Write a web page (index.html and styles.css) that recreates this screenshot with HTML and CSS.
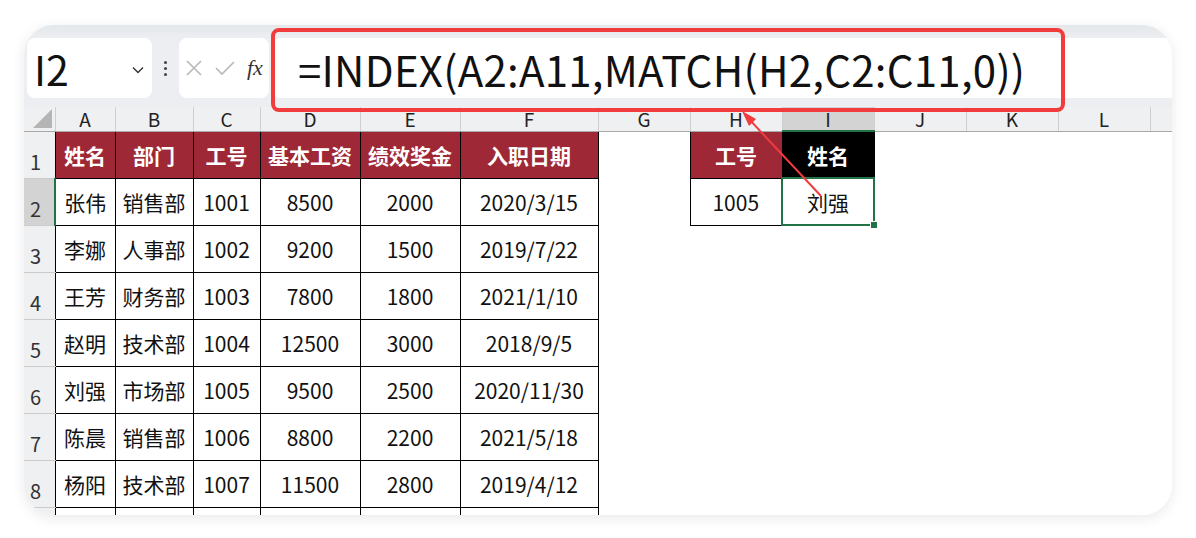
FILE: index.html
```html
<!DOCTYPE html>
<html lang="zh-CN">
<head>
<meta charset="utf-8">
<title>INDEX MATCH</title>
<link rel="stylesheet" href="styles.css">
</head>
<body>
<div class="card">
  <div class="toolbar">
    <div class="namebox">
      <span class="ref">I2</span>
      <svg class="chev" width="12" height="8" viewBox="0 0 12 8"><polyline points="1,1.5 6,6.5 11,1.5" fill="none" stroke="#333" stroke-width="1.4"/></svg>
    </div>
    <div class="dots"><span></span><span></span><span></span></div>
    <div class="fxbox">
      <svg width="18" height="18" viewBox="0 0 18 18"><path d="M2 2 L16 16 M16 2 L2 16" stroke="#b8b8b8" stroke-width="1.6" fill="none"/></svg>
      <svg width="20" height="16" viewBox="0 0 20 16"><polyline points="1,8 7,14 19,2" stroke="#b8b8b8" stroke-width="1.6" fill="none"/></svg>
      <span class="fx">fx</span>
    </div>
    <div class="formula">=INDEX(A2:A11,MATCH(H2,C2:C11,0))</div>
  </div>
  <table class="sheet">
    <colgroup>
      <col class="w-rh"><col class="w-a"><col class="w-b"><col class="w-c"><col class="w-d"><col class="w-e"><col class="w-f">
      <col class="w-g"><col class="w-g"><col class="w-g"><col class="w-g"><col class="w-g"><col class="w-g"><col>
    </colgroup>
    <tr class="colrow">
      <th class="corner"><span class="tri"></span></th>
      <th class="col">A</th><th class="col">B</th><th class="col">C</th><th class="col">D</th><th class="col">E</th><th class="col">F</th>
      <th class="col">G</th><th class="col">H</th><th class="col sel">I</th><th class="col">J</th><th class="col">K</th><th class="col">L</th><th class="col last"></th>
    </tr>
    <tr>
      <td class="rh">1</td>
      <td class="h">姓名</td><td class="h">部门</td><td class="h">工号</td><td class="h">基本工资</td><td class="h">绩效奖金</td><td class="h">入职日期</td>
      <td class="e"></td><td class="h">工号</td><td class="h black">姓名</td><td class="e"></td><td class="e"></td><td class="e"></td><td class="e"></td>
    </tr>
    <tr>
      <td class="rh rsel">2</td>
      <td class="d">张伟</td><td class="d">销售部</td><td class="d">1001</td><td class="d">8500</td><td class="d">2000</td><td class="d">2020/3/15</td>
      <td class="e"></td><td class="d">1005</td><td class="d active">刘强<span class="handle"></span></td><td class="e"></td><td class="e"></td><td class="e"></td><td class="e"></td>
    </tr>
    <tr>
      <td class="rh">3</td>
      <td class="d">李娜</td><td class="d">人事部</td><td class="d">1002</td><td class="d">9200</td><td class="d">1500</td><td class="d">2019/7/22</td>
      <td class="e" colspan="7"></td>
    </tr>
    <tr>
      <td class="rh">4</td>
      <td class="d">王芳</td><td class="d">财务部</td><td class="d">1003</td><td class="d">7800</td><td class="d">1800</td><td class="d">2021/1/10</td>
      <td class="e" colspan="7"></td>
    </tr>
    <tr>
      <td class="rh">5</td>
      <td class="d">赵明</td><td class="d">技术部</td><td class="d">1004</td><td class="d">12500</td><td class="d">3000</td><td class="d">2018/9/5</td>
      <td class="e" colspan="7"></td>
    </tr>
    <tr>
      <td class="rh">6</td>
      <td class="d">刘强</td><td class="d">市场部</td><td class="d">1005</td><td class="d">9500</td><td class="d">2500</td><td class="d">2020/11/30</td>
      <td class="e" colspan="7"></td>
    </tr>
    <tr>
      <td class="rh">7</td>
      <td class="d">陈晨</td><td class="d">销售部</td><td class="d">1006</td><td class="d">8800</td><td class="d">2200</td><td class="d">2021/5/18</td>
      <td class="e" colspan="7"></td>
    </tr>
    <tr>
      <td class="rh">8</td>
      <td class="d">杨阳</td><td class="d">技术部</td><td class="d">1007</td><td class="d">11500</td><td class="d">2800</td><td class="d">2019/4/12</td>
      <td class="e" colspan="7"></td>
    </tr>
    <tr>
      <td class="rh"></td>
      <td class="d"></td><td class="d"></td><td class="d"></td><td class="d"></td><td class="d"></td><td class="d"></td>
      <td class="e" colspan="7"></td>
    </tr>
  </table>
  <svg class="overlay" width="1148" height="490" viewBox="0 0 1148 490">
    <rect x="249" y="5" width="790" height="80" rx="6" ry="6" fill="none" stroke="#f03c3c" stroke-width="4"/>
    <line x1="797" y1="171" x2="724" y2="93" stroke="#f03c3c" stroke-width="2"/>
    <polygon points="718,86 732,94 725,101" fill="#f03c3c"/>
  </svg>
</div>
</body>
</html>
```
FILE: styles.css
```css
html, body {
  margin: 0;
  padding: 0;
  background: #ffffff;
}
body {
  padding: 25px 24px;
  font-family: "Noto Sans CJK SC", "Noto Sans", sans-serif;
}
.card {
  position: relative;
  width: 1148px;
  height: 490px;
  border-radius: 30px;
  overflow: hidden;
  background: #ffffff;
  box-shadow: 0 3px 14px rgba(0, 0, 0, 0.09);
}
.toolbar {
  display: flex;
  align-items: flex-start;
  height: 82px;
  box-sizing: border-box;
  padding-top: 13px;
  padding-left: 3px;
  background: linear-gradient(#e4e7eb, #eceef1 12px);
}
.namebox {
  width: 125px;
  height: 60px;
  background: #ffffff;
  border-radius: 8px;
  display: flex;
  align-items: center;
  justify-content: space-between;
  padding: 0 8px 0 7px;
  box-sizing: border-box;
}
.ref {
  font-family: "Noto Sans CJK SC", sans-serif;
  font-size: 41px;
  color: #111;
  line-height: 1;
}
.chev { margin-top: 4px; }
.dots {
  width: 27px;
  height: 60px;
  display: flex;
  flex-direction: column;
  align-items: center;
  justify-content: center;
  gap: 3px;
}
.dots span {
  width: 3px;
  height: 3px;
  border-radius: 50%;
  background: #444;
}
.fxbox {
  width: 90px;
  height: 60px;
  background: #ffffff;
  border-radius: 8px;
  display: flex;
  align-items: center;
  padding-left: 6px;
  gap: 12px;
  box-sizing: border-box;
}
.fx {
  font-family: "Liberation Serif", serif;
  font-style: italic;
  font-size: 22px;
  color: #333;
}
.formula {
  flex: 1;
  height: 60px;
  margin-left: 3px;
  background: #ffffff;
  border-radius: 8px 0 0 8px;
  display: flex;
  align-items: center;
  padding-left: 26px;
  font-family: "Noto Sans CJK SC", sans-serif;
  font-size: 42px;
  letter-spacing: 0.25px;
  color: #111;
  white-space: nowrap;
}
.sheet {
  table-layout: fixed;
  border-collapse: collapse;
  width: 1148px;
}
.w-rh { width: 31px; }
.w-a { width: 60px; }
.w-b { width: 78px; }
.w-c { width: 67px; }
.w-d { width: 100px; }
.w-e { width: 100px; }
.w-f { width: 138px; }
.w-g { width: 92px; }
.colrow { height: 23px; }
.colrow th {
  background: #eff0f2;
  font-weight: 400;
  font-size: 19px;
  color: #222;
  padding: 0;
  line-height: 22px;
  padding-top: 1px;
  border-bottom: 1px solid #a8a8a8;
}
.col { border-left: 1px solid #cfcfcf; }
.col.sel {
  background: #d3d3d3;
  border-bottom: 2px solid #217346;
}
.corner {
  position: relative;
}
.tri {
  position: absolute;
  right: 3px;
  bottom: 3px;
  width: 0;
  height: 0;
  border-left: 19px solid transparent;
  border-bottom: 19px solid #b5b5b5;
}
tr { height: 47px; }
td {
  padding: 0;
  text-align: center;
  font-size: 21px;
  color: #111;
  white-space: nowrap;
  overflow: hidden;
}
.rh {
  background: #eff0f2;
  color: #333;
  font-size: 20px;
  text-align: left;
  vertical-align: bottom;
  padding: 0 0 4px 6px;
  line-height: 24px;
  border-bottom: 1px solid #cbcbcb;
}
.rh.rsel {
  background: #d3d3d3;
  border-right: 2px solid #217346;
}
.h {
  background: #9f2836;
  color: #ffffff;
  font-weight: 700;
  border: 1px solid #000;
}
.h.black { background: #000000; }
.d {
  border: 1px solid #000;
  background: #ffffff;
}
.active {
  position: relative;
  overflow: visible;
  border: 2px solid #217346;
}
.handle {
  position: absolute;
  right: -5px;
  bottom: -5px;
  width: 6px;
  height: 6px;
  background: #217346;
  border: 1px solid #ffffff;
}
.e { background: #ffffff; }
.overlay {
  position: absolute;
  left: 0;
  top: 0;
  pointer-events: none;
}
```
